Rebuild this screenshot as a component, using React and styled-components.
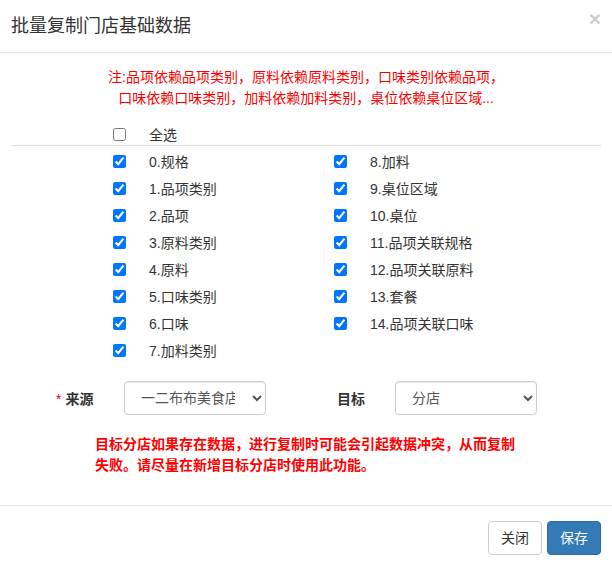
import React from "react";
import styled, { createGlobalStyle } from "styled-components";

const GlobalStyle = createGlobalStyle`
  html, body {
    margin: 0;
    padding: 0;
    background: #fff;
  }
  body {
    font-family: "Liberation Sans", "Noto Sans CJK SC", sans-serif;
    font-size: 14px;
    color: #333;
  }
  * { box-sizing: border-box; }
`;

const Modal = styled.div`
  width: 612px;
  min-height: 565px;
  background: #fff;
  display: flex;
  flex-direction: column;
`;

const Header = styled.div`
  flex: none;
  height: 53px;
  padding: 0 11px;
  display: flex;
  align-items: center;
  justify-content: space-between;
  border-bottom: 1px solid #e5e5e5;
`;

const Title = styled.h4`
  margin: 0;
  font-size: 18px;
  font-weight: normal;
  line-height: 26px;
  color: #333;
`;

const CloseButton = styled.button`
  align-self: flex-start;
  margin-top: 8px;
  padding: 0;
  border: 0;
  background: transparent;
  font-family: "Liberation Sans", sans-serif;
  font-size: 21px;
  font-weight: bold;
  line-height: 21px;
  color: #000;
  opacity: 0.2;
  cursor: pointer;
`;

const Body = styled.div`
  flex: none;
  padding: 14px 11px 0;
`;

const Note = styled.p`
  margin: 0;
  text-align: center;
  font-size: 14px;
  line-height: 21px;
  color: #ff0000;
`;

const SelectAllRow = styled.label`
  margin-top: 13px;
  height: 24px;
  padding: 3px 0 1px 102px;
  display: flex;
  align-items: center;
  border-bottom: 1px solid #ddd;
`;

const CheckGrid = styled.div`
  margin-top: 2px;
  padding-left: 102px;
  display: grid;
  grid-template-columns: 221px 221px;
  grid-template-rows: repeat(8, 27px);
  grid-auto-flow: column;
`;

const CheckItem = styled.label`
  display: flex;
  align-items: center;
  cursor: pointer;
`;

const Box = styled.input.attrs({ type: "checkbox" })`
  margin: 0;
  width: 13px;
  height: 13px;
  flex: none;
`;

const CheckText = styled.span`
  margin-left: 23px;
  font-size: 14px;
  line-height: 20px;
  color: #333;
`;

const FormRow = styled.div`
  margin-top: 17px;
  padding-left: 45px;
  display: flex;
  align-items: center;
`;

const FieldLabel = styled.label`
  width: ${(p) => p.$width}px;
  margin-left: ${(p) => p.$offset || 0}px;
  font-size: 14px;
  font-weight: bold;
  color: #333;
  flex: none;
`;

const Required = styled.span`
  color: #e00;
  font-weight: normal;
  margin-right: 4px;
`;

const Select = styled.select`
  width: 142px;
  height: 34px;
  padding: 6px 14px 6px 12px;
  border: 1px solid #ccc;
  border-radius: 4px;
  background: #fff;
  font-family: "Liberation Sans", "Noto Sans CJK SC", sans-serif;
  font-size: 14px;
  color: #555;
  box-shadow: inset 0 1px 1px rgba(0, 0, 0, 0.075);
  flex: none;
`;

const Warning = styled.p`
  margin: 19px 0 29px 84px;
  width: 425px;
  font-size: 14px;
  font-weight: bold;
  line-height: 21px;
  color: #ff0000;
`;

const Footer = styled.div`
  flex: none;
  border-top: 1px solid #e5e5e5;
  padding: 15px 11px 10px;
  display: flex;
  justify-content: flex-end;
  gap: 5px;
`;

const Button = styled.button`
  height: 34px;
  padding: 6px 12px;
  border-radius: 4px;
  font-family: "Liberation Sans", "Noto Sans CJK SC", sans-serif;
  font-size: 14px;
  line-height: 20px;
  cursor: pointer;
  border: 1px solid ${(p) => (p.$primary ? "#2e6da4" : "#ccc")};
  background: ${(p) => (p.$primary ? "#337ab7" : "#fff")};
  color: ${(p) => (p.$primary ? "#fff" : "#333")};
`;

const categories = [
  "0.规格",
  "1.品项类别",
  "2.品项",
  "3.原料类别",
  "4.原料",
  "5.口味类别",
  "6.口味",
  "7.加料类别",
  "8.加料",
  "9.桌位区域",
  "10.桌位",
  "11.品项关联规格",
  "12.品项关联原料",
  "13.套餐",
  "14.品项关联口味",
];

export default function App() {
  return (
    <>
      <GlobalStyle />
      <Modal>
        <Header>
          <Title>批量复制门店基础数据</Title>
          <CloseButton aria-label="close">×</CloseButton>
        </Header>
        <Body>
          <Note>
            注:品项依赖品项类别，原料依赖原料类别，口味类别依赖品项，
            <br />
            口味依赖口味类别，加料依赖加料类别，桌位依赖桌位区域...
          </Note>
          <SelectAllRow>
            <Box />
            <CheckText>全选</CheckText>
          </SelectAllRow>
          <CheckGrid>
            {categories.map((c) => (
              <CheckItem key={c}>
                <Box defaultChecked />
                <CheckText>{c}</CheckText>
              </CheckItem>
            ))}
          </CheckGrid>
          <FormRow>
            <FieldLabel $width={68}>
              <Required>*</Required>来源
            </FieldLabel>
            <Select defaultValue="a">
              <option value="a">一二布布美食店总店</option>
            </Select>
            <FieldLabel $width={58} $offset={71}>
              目标
            </FieldLabel>
            <Select defaultValue="b">
              <option value="b">分店</option>
            </Select>
          </FormRow>
          <Warning>
            目标分店如果存在数据，进行复制时可能会引起数据冲突，从而复制失败。请尽量在新增目标分店时使用此功能。
          </Warning>
        </Body>
        <Footer>
          <Button>关闭</Button>
          <Button $primary>保存</Button>
        </Footer>
      </Modal>
    </>
  );
}
